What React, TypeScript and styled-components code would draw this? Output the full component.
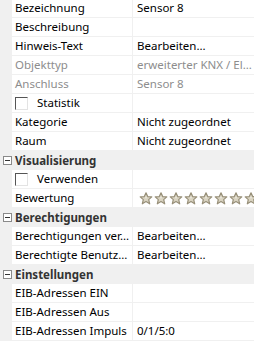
import React from 'react';
import styled, { createGlobalStyle } from 'styled-components';

const GlobalStyle = createGlobalStyle`
  html, body {
    margin: 0;
    padding: 0;
    background: #ffffff;
  }
  body {
    font-family: 'Noto Sans', 'Open Sans', sans-serif;
    font-size: 11.5px;
    overflow: hidden;
  }
`;

const Grid = styled.div`
  width: 254px;
  margin-top: -1px;
  display: flex;
  flex-direction: column;
`;

const Row = styled.div`
  display: flex;
  height: 19px;
  box-sizing: border-box;
  border-bottom: 1px solid #f0f0f0;
  background: #ffffff;
`;

const CategoryRow = styled.div`
  display: flex;
  align-items: center;
  height: 19px;
  box-sizing: border-box;
  background: #f0f0f0;
`;

const Gutter = styled.div`
  width: 12px;
  flex: none;
  background: #f0f0f0;
  display: flex;
  align-items: center;
  justify-content: center;
`;

const NameCell = styled.div<{ $disabled?: boolean }>`
  width: 121px;
  flex: none;
  box-sizing: border-box;
  border-right: 1px solid #f0f0f0;
  padding-left: 3px;
  display: flex;
  align-items: center;
  gap: 9px;
  color: ${(p) => (p.$disabled ? '#8d8d8d' : '#000000')};
  white-space: nowrap;
  overflow: hidden;
  line-height: 18px;
`;

const ValueCell = styled.div<{ $disabled?: boolean }>`
  flex: 1;
  min-width: 0;
  padding-left: 4px;
  display: flex;
  align-items: center;
  color: ${(p) => (p.$disabled ? '#8d8d8d' : '#000000')};
  white-space: nowrap;
  overflow: hidden;
  line-height: 18px;
`;

const CategoryTitle = styled.span`
  padding-left: 3px;
  font-weight: 700;
  color: #333333;
  line-height: 18px;
`;

const CollapseBox = styled.span`
  width: 9px;
  height: 9px;
  box-sizing: border-box;
  border: 1px solid #8a8a8a;
  background: #ffffff;
  position: relative;
  margin-left: 2px;
  &::after {
    content: '';
    position: absolute;
    left: 1px;
    right: 1px;
    top: 3px;
    height: 1px;
    background: #333333;
  }
`;

const CheckBox = styled.span`
  width: 13px;
  height: 13px;
  box-sizing: border-box;
  border-top: 1px solid #555555;
  border-left: 1px solid #555555;
  border-right: 1px solid #e3e3e3;
  border-bottom: 1px solid #e3e3e3;
  background: #ffffff;
  flex: none;
`;

const Stars = styled.div`
  display: flex;
  gap: 1px;
  padding-left: 2px;
`;

const Star = () => (
  <svg width="14" height="13" viewBox="0 0 14 13">
    <path
      d="M7 0.8 L8.7 4.6 L12.8 4.9 L9.7 7.6 L10.7 11.8 L7 9.6 L3.3 11.8 L4.3 7.6 L1.2 4.9 L5.3 4.6 Z"
      fill="#d9d3c1"
      stroke="#978f78"
      strokeWidth="1.2"
      strokeLinejoin="round"
    />
    <path d="M7 4.2 L7.9 6.2 L6.1 6.2 Z" fill="#f6f3ea" />
  </svg>
);

type Prop = {
  name: string;
  value?: string;
  disabled?: boolean;
  checkbox?: boolean;
  stars?: boolean;
};

type Section = { title?: string; props: Prop[] };

// labels are shown as the grid clips them
const sections: Section[] = [
  {
    props: [
      { name: 'Bezeichnung', value: 'Sensor 8' },
      { name: 'Beschreibung' },
      { name: 'Hinweis-Text', value: 'Bearbeiten...' },
      { name: 'Objekttyp', value: 'erweiterter KNX / El...', disabled: true },
      { name: 'Anschluss', value: 'Sensor 8', disabled: true },
      { name: 'Statistik', checkbox: true },
      { name: 'Kategorie', value: 'Nicht zugeordnet' },
      { name: 'Raum', value: 'Nicht zugeordnet' },
    ],
  },
  {
    title: 'Visualisierung',
    props: [
      { name: 'Verwenden', checkbox: true },
      { name: 'Bewertung', stars: true },
    ],
  },
  {
    title: 'Berechtigungen',
    props: [
      { name: 'Berechtigungen ver...', value: 'Bearbeiten...' },
      { name: 'Berechtigte Benutz...', value: 'Bearbeiten...' },
    ],
  },
  {
    title: 'Einstellungen',
    props: [
      { name: 'EIB-Adressen EIN' },
      { name: 'EIB-Adressen Aus' },
      { name: 'EIB-Adressen Impuls', value: '0/1/5:0' },
    ],
  },
];

export default function App() {
  return (
    <>
      <GlobalStyle />
      <Grid>
        {sections.map((section, si) => (
          <React.Fragment key={si}>
            {section.title && (
              <CategoryRow>
                <Gutter>
                  <CollapseBox />
                </Gutter>
                <CategoryTitle>{section.title}</CategoryTitle>
              </CategoryRow>
            )}
            {section.props.map((p) => (
              <Row key={p.name}>
                <Gutter />
                <NameCell $disabled={p.disabled}>
                  {p.checkbox && <CheckBox />}
                  <span>{p.name}</span>
                </NameCell>
                <ValueCell $disabled={p.disabled}>
                  {p.stars ? (
                    <Stars>
                      {Array.from({ length: 9 }).map((_, i) => (
                        <Star key={i} />
                      ))}
                    </Stars>
                  ) : (
                    <span>{p.value}</span>
                  )}
                </ValueCell>
              </Row>
            ))}
          </React.Fragment>
        ))}
      </Grid>
    </>
  );
}
